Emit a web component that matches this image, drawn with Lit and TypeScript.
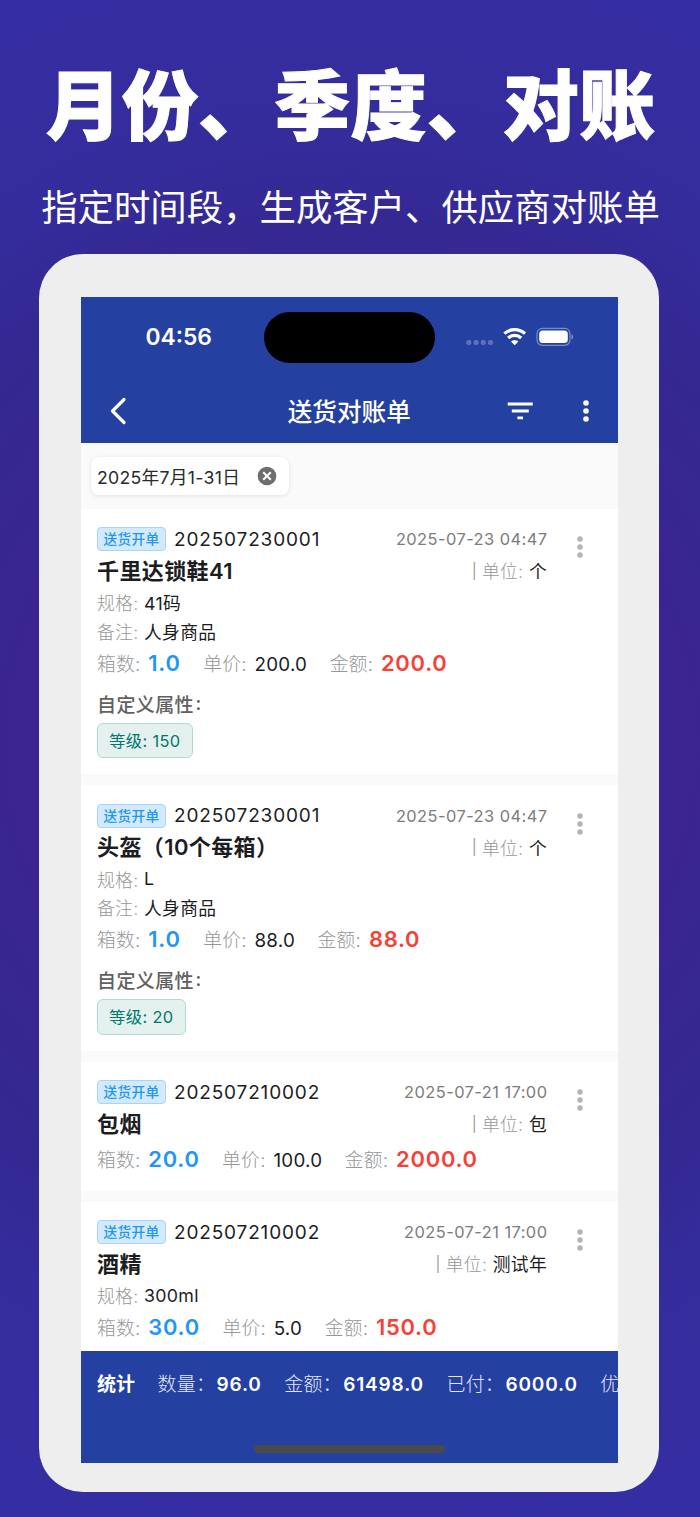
import { html, css, svg, nothing, LitElement } from 'lit'
import { customElement, property } from 'lit/decorators.js'

interface Bill {
  code: string
  time: string
  name: string
  unit: string
  spec?: string
  note?: string
  boxes: string
  price: string
  amount: string
  level?: string
}

const BILLS: Bill[] = [
  { code: '202507230001', time: '2025-07-23 04:47', name: '千里达锁鞋41', unit: '个', spec: '41码', note: '人身商品', boxes: '1.0', price: '200.0', amount: '200.0', level: '150' },
  { code: '202507230001', time: '2025-07-23 04:47', name: '头盔（10个每箱）', unit: '个', spec: 'L', note: '人身商品', boxes: '1.0', price: '88.0', amount: '88.0', level: '20' },
  { code: '202507210002', time: '2025-07-21 17:00', name: '包烟', unit: '包', boxes: '20.0', price: '100.0', amount: '2000.0' },
  { code: '202507210002', time: '2025-07-21 17:00', name: '酒精', unit: '测试年', spec: '300ml', boxes: '30.0', price: '5.0', amount: '150.0' }
]

const TOTALS = [
  { label: '数量：', value: '96.0' },
  { label: '金额：', value: '61498.0' },
  { label: '已付：', value: '6000.0' },
  { label: '优', value: '' }
]

const dots = svg`
  <circle cx="4" cy="4" r="2.8"></circle>
  <circle cx="4" cy="12" r="2.8"></circle>
  <circle cx="4" cy="20" r="2.8"></circle>
`

@customElement('bill-card')
export class BillCard extends LitElement {
  static styles = css`
    :host {
      display: block;
      flex: none;
      background: #fff;
      padding: 0 0 14.5px 16.5px;
      color: #1d1d1f;
    }

    .wrap {
      position: relative;
      padding-top: 18px;
    }

    .row {
      display: flex;
      align-items: center;
      white-space: nowrap;
    }

    .head {
      height: 25px;
      padding-right: 71px;
    }

    .badge {
      box-sizing: border-box;
      width: 69px;
      height: 24px;
      border: 1px solid #a6d5fa;
      border-radius: 4px;
      background: #d3e9fc;
      color: #2196f3;
      font-size: 13.7px;
      font-weight: 500;
      line-height: 23.5px;
      text-align: center;
      letter-spacing: 0.25px;
    }

    .code {
      margin-left: 8px;
      font-size: 19px;
      letter-spacing: 0.85px;
    }

    .time {
      margin-left: auto;
      font-size: 16.4px;
      letter-spacing: 0.45px;
      margin-right: -0.45px;
      color: #7c7c7c;
    }

    .title {
      height: 37.5px;
      padding-right: 71px;
      justify-content: space-between;
    }

    .name {
      height: 37px;
      line-height: 39.5px;
      font-size: 22px;
      font-weight: 600;
      letter-spacing: 0.4px;
    }

    .unit {
      display: flex;
      align-items: center;
      height: 34px;
    }

    .unit,
    .field {
      font-size: 17.8px;
      letter-spacing: 0.3px;
    }

    .bar {
      margin-right: 5px;
      font-size: 15px;
      color: #9b9b9b;
    }

    .field {
      box-sizing: border-box;
      height: 28.5px;
      padding-bottom: 2px;
    }

    .label {
      color: #979797;
      font-weight: 300;
      margin-right: 5.5px;
    }

    .sums {
      box-sizing: border-box;
      height: 34px;
      padding-bottom: 2px;
      gap: 22.5px;
      font-size: 18.8px;
      letter-spacing: 0.25px;
    }

    .sum {
      display: flex;
      align-items: baseline;
    }

    .sum .label {
      margin-right: 7.7px;
    }

    .strong {
      font-size: 21.9px;
      font-weight: 600;
      letter-spacing: 0.75px;
    }

    .blue {
      color: #2196f3;
    }

    .red {
      color: #f44336;
    }

    .attrs {
      box-sizing: border-box;
      height: 29px;
      margin-top: 9.5px;
      padding-bottom: 2px;
      font-size: 19px;
      font-weight: 500;
      letter-spacing: 0.4px;
      color: #616161;
    }

    .colon {
      margin-left: 1.5px;
    }

    .tag {
      box-sizing: border-box;
      display: inline-block;
      height: 35.5px;
      margin: 4px 0 1.5px;
      padding: 0 11px;
      border: 1px solid #b2dad5;
      border-radius: 6px;
      background: #e4f1ef;
      color: #00796b;
      font-size: 16.4px;
      letter-spacing: 0.35px;
      line-height: 34.5px;
      vertical-align: top;
    }

    .more {
      position: absolute;
      top: 26.5px;
      right: 34px;
      width: 8px;
      height: 24px;
      fill: #b4b4b4;
    }
  `

  @property({ attribute: false }) bill!: Bill

  renderField (label: string, value?: string) {
    if (!value) return nothing
    return html`<div class="row field"><span class="label">${label}:</span><span>${value}</span></div>`
  }

  render () {
    const b = this.bill
    return html`
      <div class="wrap">
        <div class="row head">
          <span class="badge">送货开单</span>
          <span class="code">${b.code}</span>
          <span class="time">${b.time}</span>
        </div>
        <div class="row title">
          <span class="name">${b.name}</span>
          <span class="unit"><span class="bar">|</span><span class="label">单位:</span>${b.unit}</span>
        </div>
        ${this.renderField('规格', b.spec)}
        ${this.renderField('备注', b.note)}
        <div class="row sums">
          <span class="sum"><span class="label">箱数:</span><span class="strong blue">${b.boxes}</span></span>
          <span class="sum"><span class="label">单价:</span><span>${b.price}</span></span>
          <span class="sum"><span class="label">金额:</span><span class="strong red">${b.amount}</span></span>
        </div>
        ${b.level
          ? html`
            <div class="row attrs">自定义属性<span class="colon">:</span></div>
            <span class="tag">等级: ${b.level}</span>
          `
          : nothing}
        <svg class="more" viewBox="0 0 8 24">${dots}</svg>
      </div>
    `
  }
}

@customElement('app-root')
export class AppRoot extends LitElement {
  static styles = css`
    :host {
      display: flex;
      flex-direction: column;
      align-items: center;
      box-sizing: border-box;
      width: 700px;
      height: 1517px;
      overflow: hidden;
      background: radial-gradient(circle 830px at 350px 745px, #3d2390 0%, #3b2590 40%, #342890 59%, #352c9c 75%, #352ea3 100%);
      font-family: Inter, 'Noto Sans CJK SC', sans-serif;
    }

    h1 {
      margin: 51px 0 0 1px;
      height: 110px;
      line-height: 110px;
      font-size: 76.2px;
      font-weight: 900;
      color: #fff;
      -webkit-text-stroke: 1px #fff;
      white-space: nowrap;
    }

    h2 {
      margin: 21px 0 0 1px;
      height: 53px;
      line-height: 53px;
      font-size: 36.4px;
      font-weight: 400;
      color: #fff;
      white-space: nowrap;
    }

    .phone {
      box-sizing: border-box;
      width: 620px;
      height: 1238px;
      margin-top: 19px;
      margin-right: 2px;
      padding: 42.7px 41px 29px 41.5px;
      border-radius: 44px;
      background: #eee;
    }

    .screen {
      display: flex;
      flex-direction: column;
      height: 1166.5px;
      overflow: hidden;
      background: #fafafa;
    }

    .top {
      flex: none;
      height: 146px;
      background: #2440a1;
      color: #fff;
    }

    .status {
      display: grid;
      grid-template-columns: 183px 171.5px 1fr;
      align-items: center;
      height: 81px;
    }

    .clock {
      padding-left: 65px;
      padding-bottom: 1px;
      font-size: 22.8px;
      font-weight: 600;
    }

    .island {
      height: 51px;
      border-radius: 26px;
      background: #000;
    }

    .signal {
      display: block;
      width: 110px;
      height: 24px;
      margin: -1px 0 0 30px;
    }

    .nav {
      display: grid;
      grid-template-columns: 183px 171.5px 1fr;
      align-items: center;
      height: 65px;
    }

    .back {
      width: 18px;
      height: 30px;
      margin-left: 28.5px;
      margin-top: 1px;
    }

    .caption {
      padding-bottom: 1px;
      font-size: 24.6px;
      font-weight: 500;
      text-align: center;
      white-space: nowrap;
    }

    .actions {
      display: flex;
      align-items: center;
      padding: 1px 0 0 71.5px;
      gap: 49px;
      fill: #fff;
    }

    .filters {
      flex: none;
      display: flex;
      align-items: flex-start;
      box-sizing: border-box;
      height: 66px;
      padding: 14px 10.5px 0;
    }

    .chip {
      display: flex;
      align-items: center;
      box-sizing: border-box;
      width: 198px;
      height: 38.5px;
      padding: 0 12px 0 6px;
      justify-content: space-between;
      border-radius: 8px;
      background: #fff;
      box-shadow: 0 1px 4px rgba(0, 0, 0, 0.1);
      color: #2a2a2a;
      font-size: 17.7px;
      letter-spacing: 0.28px;
      white-space: nowrap;
    }

    .list {
      flex: 1;
      min-height: 0;
      display: flex;
      flex-direction: column;
      gap: 11px;
      overflow: hidden;
    }

    .footer {
      flex: none;
      height: 112px;
      background: #2440a1;
      color: #fff;
    }

    .totals {
      display: flex;
      align-items: baseline;
      box-sizing: border-box;
      height: 66px;
      padding: 20px 0 0 16.5px;
      gap: 22.5px;
      overflow: hidden;
      font-size: 19px;
      font-weight: 600;
      line-height: 28px;
      white-space: nowrap;
    }

    .total {
      display: flex;
      align-items: baseline;
      flex: none;
      letter-spacing: 0.85px;
    }

    .total-label {
      width: 59px;
      font-weight: 300;
      letter-spacing: 0.2px;
      color: #e4e8f4;
    }

    .home {
      width: 191px;
      height: 8px;
      margin: 28px auto 0;
      border-radius: 4px;
      background: #4a4a4a;
    }
  `

  renderStatusIcons () {
    return html`
      <svg class="signal" viewBox="0 0 110 24" fill="#fff">
        <g opacity="0.25">
          <rect x="1.3" y="15" width="5" height="5" rx="1.8"></rect>
          <rect x="8.6" y="15" width="5" height="5" rx="1.8"></rect>
          <rect x="15.8" y="15" width="5" height="5" rx="1.8"></rect>
          <rect x="23" y="15" width="5" height="5" rx="1.8"></rect>
        </g>
        <g fill="none" stroke="#fff" stroke-width="3.2">
          <path d="M39.4 8.7a15 15 0 0 1 20.6 0"></path>
          <path d="M43.2 13a9.4 9.4 0 0 1 13 0"></path>
        </g>
        <path d="M49.7 20.3l-3.7-3.7a5.2 5.2 0 0 1 7.4 0z"></path>
        <rect x="72" y="3.3" width="33" height="17" rx="5.4" fill="none" stroke="#fff" stroke-opacity="0.4" stroke-width="1.2"></rect>
        <rect x="74.2" y="5.5" width="28.6" height="12.6" rx="3.6"></rect>
        <path d="M106.5 9.2c2 .8 2 4.4 0 5.2z" opacity="0.45"></path>
      </svg>
    `
  }

  render () {
    return html`
      <h1>月份、季度、对账</h1>
      <h2>指定时间段，生成客户、供应商对账单</h2>
      <div class="phone">
        <div class="screen">
          <div class="top">
            <div class="status">
              <span class="clock">04:56</span>
              <span class="island"></span>
              ${this.renderStatusIcons()}
            </div>
            <div class="nav">
              <svg class="back" viewBox="0 0 18 30" fill="none" stroke="#fff" stroke-width="3.2" stroke-linecap="round" stroke-linejoin="round">
                <path d="M15 3.5L3.5 15L15 26.5"></path>
              </svg>
              <span class="caption">送货对账单</span>
              <div class="actions">
                <svg width="26" height="18" viewBox="0 0 26 18">
                  <path d="M.7.6h25v2.8h-25zM4.8 7.6h17v2.8h-17zM10.4 14.4h5.6v2.8h-5.6z"></path>
                </svg>
                <svg width="8" height="24" viewBox="0 0 8 24">${dots}</svg>
              </div>
            </div>
          </div>
          <div class="filters">
            <div class="chip">
              <span>2025年7月1-31日</span>
              <svg width="20" height="20" viewBox="0 0 20 20">
                <circle cx="10" cy="10" r="9.3" fill="#6e6e6e"></circle>
                <path d="M6.2 6.2l7.6 7.6M13.8 6.2l-7.6 7.6" stroke="#fff" stroke-width="2"></path>
              </svg>
            </div>
          </div>
          <div class="list">
            ${BILLS.map((bill) => html`<bill-card .bill=${bill}></bill-card>`)}
          </div>
          <div class="footer">
            <div class="totals">
              <span>统计</span>
              ${TOTALS.map((t) => html`
                <span class="total"><span class="total-label">${t.label}</span>${t.value}</span>
              `)}
            </div>
            <div class="home"></div>
          </div>
        </div>
      </div>
    `
  }
}
